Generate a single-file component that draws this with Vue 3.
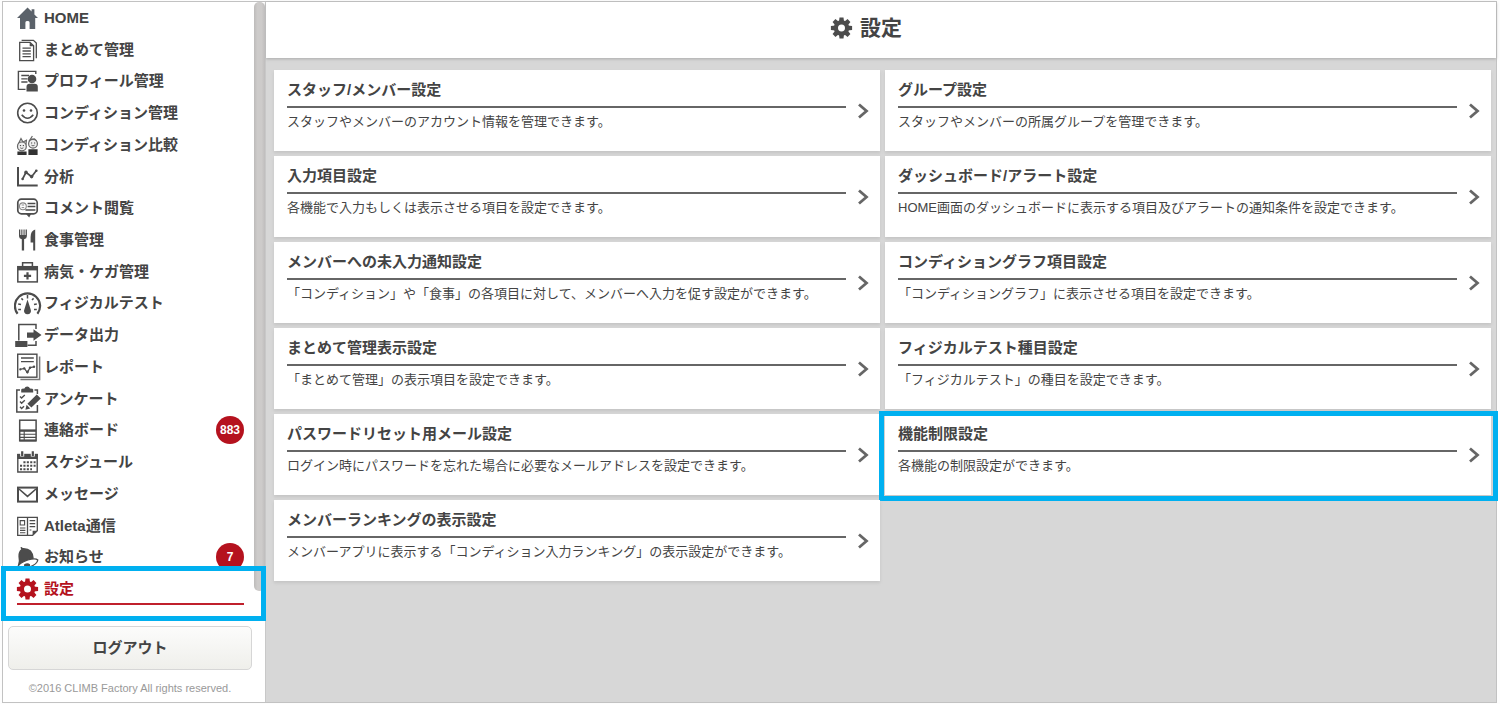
<script setup>
const teeth = (r) =>
  [0, 45, 90, 135, 180, 225, 270, 315]
    .map((a) => `<path d="M10.9 8 L11.5 ${r} H15.5 L16.1 8z" transform="rotate(${a} 13.5 14)"/>`)
    .join('')
const gear = `<g fill="currentColor">${teeth(3.4)}</g><circle cx="13.5" cy="14" r="5.6" fill="none" stroke="currentColor" stroke-width="4.2"/>`

const icons = {
  home: '<path fill="#5b626a" d="M13.5 3.6 L17.6 7.6 V5.2 H20.4 V10.4 L24 14 H21.2 V25 H15.6 V18.4 q0-1.4-2.1-1.4 t-2.1 1.4 V25 H6 V14 H3z"/>',
  docs: '<g fill="none" stroke="currentColor" stroke-width="1.3"><path d="M5.7 6.3 H16 L19.6 9.8 V24.7 H5.7z"/><path d="M7.6 4.3 H19.4 L22.3 7 V22.3"/><path d="M8.5 12.2 H16.8 M8.5 15 H16.8 M8.5 17.8 H16.8 M8.5 20.6 H16.8"/></g><path fill="currentColor" d="M15.7 6.2 V10.2 H19.8z"/>',
  profile: '<path d="M21.8 7 V4.4 H4.4 V22.4 H11.5" fill="none" stroke="currentColor" stroke-width="1.4"/><path d="M7.3 8.5 H15 M7.3 11.8 H13.5 M7.3 15 H13.5" stroke="currentColor" stroke-width="1.3"/><circle cx="18" cy="12" r="4.3" fill="currentColor"/><path d="M12.5 24.6 V20 q0-3.2 3.2-3.2 H20.6 q3.2 0 3.2 3.2 V24.6z" fill="currentColor"/>',
  smile: '<circle cx="13.5" cy="14" r="9.8" fill="none" stroke="currentColor" stroke-width="1.6"/><circle cx="10" cy="11.5" r="1.3" fill="currentColor"/><circle cx="17" cy="11.5" r="1.3" fill="currentColor"/><path d="M7.7 15.8 q5.8 7 11.6 0" fill="none" stroke="currentColor" stroke-width="1.6"/>',
  compare: '<g fill="#eee" stroke="#666" stroke-width="1.2"><path d="M4.6 12.6 L7 7.6 L9 11 L12.4 9.2 L12 13z M15 10.4 L18.4 5 M15.6 8.6 L20.5 8 L22.6 10"/><circle cx="7.9" cy="15.4" r="4.4"/><circle cx="19" cy="12.8" r="4.4"/></g><path d="M6.2 16.8 q1.6 1.4 3.2 0 M17.4 14.2 q1.6 1.4 3.2 0" fill="none" stroke="#666"/><path d="M3.4 24 V20.4 H12.6 V24z M14.4 24 V18.2 H23.6 V24z" fill="#333"/><path d="M5.9 14.6 h1.2 M8.8 14.6 h1.2 M17 12 h1.2 M20 12 h1.2" stroke="#444"/>',
  chart: '<path d="M4 4 V22.6 H23.7" fill="none" stroke="currentColor" stroke-width="2"/><path d="M8.3 16.5 L12 9.3 L17.6 13.7 L22.6 7.2" fill="none" stroke="currentColor" stroke-width="1.7"/><g fill="currentColor"><circle cx="8.6" cy="16" r="1.2"/><circle cx="12" cy="9.4" r="1.8"/><circle cx="17.6" cy="13.6" r="1.8"/><circle cx="22.3" cy="7.8" r="1.3"/></g>',
  comment: '<rect x="3.8" y="5.2" width="19.4" height="14.6" rx="3.6" fill="none" stroke="currentColor" stroke-width="1.7"/><circle cx="8.9" cy="12.3" r="3.4" fill="none" stroke="#888" stroke-width="1.1"/><path d="M7.6 11 h2.6 M7.6 13.6 h2.6" stroke="#888"/><path d="M13.6 9.6 H21.4 M13.6 12.6 H21.4 M11.5 16 H21.4" stroke="currentColor" stroke-width="1.5"/><path d="M12 20 H17 L15.2 23.4z" fill="currentColor"/>',
  meal: '<path fill="currentColor" d="M5 3.6 H6.3 V9 H7.3 V3.6 H8.4 V9 H9.5 V3.6 H10.6 V9 H11.6 V3.6 H12.9 V10.2 q0 2.4-2.8 3 V24.5 H7.8 V13.2 q-2.8-.6-2.8-3z M21.2 3.6 V24.5 H19.2 V16.6 H16.6 V11 q0-6 4.6-7.4z"/>',
  medical: '<path d="M8.6 8.5 V4.7 H18.4 V8.5" fill="none" stroke="currentColor" stroke-width="1.5"/><rect x="3.8" y="8.7" width="19.5" height="15.2" fill="none" stroke="currentColor" stroke-width="1.5"/><path d="M3.8 8.2 H23.3 V12.4 H3.8z" fill="currentColor"/><path d="M13.5 14.2 V21.4 M9.9 17.8 H17.1" stroke="currentColor" stroke-width="2.2"/>',
  gauge: '<path d="M3.6 24.8 A12.6 12.6 0 1 1 23.4 24.8" fill="none" stroke="currentColor" stroke-width="2.2"/><path d="M13.5 6 V9.6 M7.4 9.4 L9 11 M19.6 9.4 L18 11 M4.2 15 L7 15.6 M22.8 15 L20 15.6 M4.2 20.6 H7 M22.8 20.6 H20" stroke="currentColor" stroke-width="1.5"/><path d="M13.5 10.5 L16.6 20.2 A3.5 3.5 0 1 1 10.4 20.2z" fill="currentColor"/>',
  output: '<path d="M4.8 19.5 V3.6 H22 V8 M22 20 V24.3 H13.5" fill="none" stroke="currentColor" stroke-width="1.5"/><path d="M1.2 20 H13.4 V26 H1.2z M13 11.4 H19.5 V8.2 L27.5 14 L19.5 19.8 V16.8 H13z" fill="currentColor"/>',
  report: '<rect x="3.7" y="1.2" width="19.2" height="23" fill="none" stroke="currentColor" stroke-width="1.4"/><path d="M25.6 3.6 V26.6 H6.4" fill="none" stroke="#777" stroke-width="1.5"/><path d="M7 5 H19.8 M7 8.6 H19.8" stroke="currentColor" stroke-width="1.3"/><path d="M6 16.4 L10.4 15.4 L13.3 19.6 L16 14.6 L20 13.8" fill="none" stroke="currentColor" stroke-width="1.2"/><g fill="currentColor"><circle cx="6.3" cy="16.4" r="1.1"/><circle cx="10.2" cy="15.4" r="1.2"/><circle cx="13.4" cy="19" r="1.4"/><circle cx="16" cy="14.8" r="1.2"/><circle cx="20" cy="13.8" r="1.2"/></g>',
  survey: '<path d="M6 5 H2.8 V27 H23.4 V20 M20.5 5 H23.4 V9" fill="none" stroke="currentColor" stroke-width="1.5"/><path d="M7.2 7.4 V4.4 Q7.2 3.4 10.4 3.4 A3 3 0 0 1 16 3.4 Q19.2 3.4 19.2 4.4 V7.4z" fill="currentColor"/><path d="M6 11.4 l1.6 1.7 l3.2-3 M6 16.6 l1.6 1.7 l3.2-3 M6 21.8 l1.6 1.7 l2.4-2.3" fill="none" stroke="currentColor" stroke-width="1.4"/><path d="M22.8 9.6 L26.8 13.4 L17.4 22.6 L13.4 18.8z M12.6 19.8 L16.2 23.4 L11.4 24.8z" fill="currentColor"/>',
  board: '<rect x="5.7" y="4.2" width="16.4" height="20.6" fill="none" stroke="currentColor" stroke-width="1.5"/><path d="M5.7 14.6 H22.1" stroke="currentColor" stroke-width="2.4"/><path d="M5.7 18.2 H22.1 M5.7 21.4 H22.1 M10.2 15 V24.5" stroke="currentColor" stroke-width="1.1"/><path d="M5.7 24.4 H22.1" stroke="currentColor" stroke-width="2"/>',
  calendar: '<path d="M3.8 6 V24 H23.2 V6" fill="none" stroke="currentColor" stroke-width="1.4"/><path d="M3.2 5.8 H23.8 V11 H3.2z" fill="currentColor"/><path d="M8.2 3 V8.6 M18.8 3 V8.6" stroke="#fff" stroke-width="4"/><path d="M8.2 3.2 V8 M18.8 3.2 V8" stroke="currentColor" stroke-width="2.2"/><path d="M9.4 14.3 H21.6 M6 17.8 H21.6 M6 21.3 H18" stroke="currentColor" stroke-width="2.1" stroke-dasharray="2.1 1.3"/>',
  mail: '<rect x="4" y="7.6" width="19" height="14" fill="none" stroke="currentColor" stroke-width="2"/><path d="M5 9 L13.5 16.4 L22 9" fill="none" stroke="currentColor" stroke-width="1.6"/>',
  news: '<path d="M3.7 5.4 H23.3 V18.8 L18.6 23.4 H3.7z M13.5 5.4 V23.4" fill="none" stroke="currentColor" stroke-width="1.3"/><path d="M23.3 18.8 H18.6 V23.4z" fill="currentColor"/><path d="M6.2 8.6 H10.6 V13 H6.2z M15.6 8.6 H21.2 M15.6 11.6 H21.2 M15.6 14.6 H21.2 M6 16 H11.4 M6 18.4 H11.4 M6 20.8 H11.4 M15.6 18 H17.4" fill="none" stroke="currentColor" stroke-width="1.1"/>',
  bell: '<path d="M6.4 4.6 q1.4-1.2 2.2 .4 q10.4-.6 11.2 10.4 L3.8 22.8 q1.8-4.6 .6-9.4 q-.2-5 2.8-7.2z" fill="currentColor"/><path d="M4 23.4 q1.4-3.4 9.8-6.4 q7.6-2.2 10 0 q-.6 4.4-9 7.3 q-7.7 2-10.8-.9z" fill="#fff" stroke="currentColor" stroke-width="1.3"/><path d="M10 21.6 q3.4-2.6 6-.4 q.8 3-2.6 3.4 q-3.8 0-3.4-3z" fill="currentColor"/>',
  gear
}

const menu = [
  { icon: 'home', label: 'HOME' },
  { icon: 'docs', label: 'まとめて管理' },
  { icon: 'profile', label: 'プロフィール管理' },
  { icon: 'smile', label: 'コンディション管理' },
  { icon: 'compare', label: 'コンディション比較' },
  { icon: 'chart', label: '分析' },
  { icon: 'comment', label: 'コメント閲覧' },
  { icon: 'meal', label: '食事管理' },
  { icon: 'medical', label: '病気・ケガ管理' },
  { icon: 'gauge', label: 'フィジカルテスト' },
  { icon: 'output', label: 'データ出力' },
  { icon: 'report', label: 'レポート' },
  { icon: 'survey', label: 'アンケート' },
  { icon: 'board', label: '連絡ボード', badge: 883 },
  { icon: 'calendar', label: 'スケジュール' },
  { icon: 'mail', label: 'メッセージ' },
  { icon: 'news', label: 'Atleta通信' },
  { icon: 'bell', label: 'お知らせ', badge: 7 },
  { icon: 'gear', label: '設定', active: true }
]

const cards = [
  { title: 'スタッフ/メンバー設定', text: 'スタッフやメンバーのアカウント情報を管理できます。' },
  { title: 'グループ設定', text: 'スタッフやメンバーの所属グループを管理できます。' },
  { title: '入力項目設定', text: '各機能で入力もしくは表示させる項目を設定できます。' },
  { title: 'ダッシュボード/アラート設定', text: 'HOME画面のダッシュボードに表示する項目及びアラートの通知条件を設定できます。' },
  { title: 'メンバーへの未入力通知設定', text: '「コンディション」や「食事」の各項目に対して、メンバーへ入力を促す設定ができます。' },
  { title: 'コンディショングラフ項目設定', text: '「コンディショングラフ」に表示させる項目を設定できます。' },
  { title: 'まとめて管理表示設定', text: '「まとめて管理」の表示項目を設定できます。' },
  { title: 'フィジカルテスト種目設定', text: '「フィジカルテスト」の種目を設定できます。' },
  { title: 'パスワードリセット用メール設定', text: 'ログイン時にパスワードを忘れた場合に必要なメールアドレスを設定できます。' },
  { title: '機能制限設定', text: '各機能の制限設定ができます。', marked: true },
  { title: 'メンバーランキングの表示設定', text: 'メンバーアプリに表示する「コンディション入力ランキング」の表示設定ができます。' }
]
</script>

<template>
  <div class="frame">
    <aside class="sidebar">
      <nav class="nav">
        <ul class="menu">
          <li v-for="item in menu" :key="item.label" class="item">
            <a href="#" class="link" :class="{ active: item.active }">
              <svg class="icon" viewBox="0 0 28 28" aria-hidden="true" v-html="icons[item.icon]"></svg>
              <span class="label">{{ item.label }}</span>
              <span v-if="item.badge" class="badge">{{ item.badge }}</span>
            </a>
            <span v-if="item.active" class="menu-mark"></span>
          </li>
        </ul>
        <span class="scrollbar"></span>
      </nav>
      <div class="foot">
        <button type="button" class="logout">ログアウト</button>
        <small class="copy">©2016 CLIMB Factory All rights reserved.</small>
      </div>
    </aside>
    <main class="main">
      <header class="header">
        <svg class="icon" viewBox="0 0 28 28" aria-hidden="true" v-html="icons.gear"></svg>
        <h1 class="heading">設定</h1>
      </header>
      <div class="grid">
        <a v-for="card in cards" :key="card.title" href="#" class="card" :class="{ marked: card.marked }">
          <div class="body">
            <h2 class="title">{{ card.title }}</h2>
            <p class="text">{{ card.text }}</p>
          </div>
          <svg class="chevron" viewBox="0 0 12 16" aria-hidden="true">
            <path d="M2 1.5 L9.5 8 L2 14.5" fill="none" stroke="currentColor" stroke-width="2.8" />
          </svg>
        </a>
      </div>
    </main>
  </div>
</template>

<style>
body {
  background: #fdfdfd;
}
</style>

<style scoped>
.frame,
.frame * {
  box-sizing: border-box;
}
.frame {
  display: flex;
  min-height: calc(100vh - 2px);
  border: 1px solid #c2c2c2;
  margin: 1px 3px 1px 2px;
  font-family: "Liberation Sans", "Noto Sans CJK JP", sans-serif;
  color: #444;
}
.sidebar {
  display: flex;
  flex-direction: column;
  flex: 0 0 263px;
  background: #fff;
  border-right: 1px solid #c8c8c8;
}
.nav {
  position: relative;
  display: flex;
  flex: 1;
}
.menu {
  display: flex;
  flex: 1;
  flex-direction: column;
  margin: 0;
  padding: 0;
  list-style: none;
}
.item {
  position: relative;
  display: flex;
  flex: 1;
}
.link {
  display: flex;
  flex: 1;
  align-items: center;
  gap: 2px;
  padding: 0 21px 0 11px;
  color: inherit;
  font-size: 15px;
  font-weight: bold;
  line-height: 20px;
  text-decoration: none;
}
.icon {
  flex: none;
  width: 28px;
  height: 28px;
  color: #4c4c4c;
}
.label {
  flex: 1;
}
.badge {
  width: 28px;
  height: 28px;
  border-radius: 50%;
  background: #b5121e;
  color: #fff;
  font-size: 12px;
  line-height: 28px;
  text-align: center;
}
.active,
.active .icon {
  color: #b5121e;
}
.active::after {
  content: "";
  position: absolute;
  right: 21px;
  bottom: 0;
  left: 14px;
  height: 2px;
  background: #c0202c;
}
.menu-mark {
  position: absolute;
  z-index: 2;
  top: -7px;
  right: -1px;
  bottom: -16px;
  left: -2px;
  border: 5px solid #00b0f0;
}
.scrollbar {
  position: absolute;
  z-index: 1;
  top: 0;
  right: 0;
  bottom: 14px;
  width: 11px;
  border-radius: 5px;
  background: linear-gradient(90deg, #bdbbba, #cdcbca 30%, #cdcbca 70%, #bfbdbd);
}
.foot {
  display: flex;
  flex-direction: column;
  gap: 12px;
  padding: 21px 13px 7px 5px;
}
.logout {
  height: 44px;
  border: 1px solid #d6d6d6;
  border-radius: 5px;
  background: linear-gradient(#fcfcfb, #efefeb);
  color: #444;
  font: bold 15px/20px "Liberation Sans", "Noto Sans CJK JP", sans-serif;
}
.copy {
  color: #999;
  font-size: 11px;
  line-height: 13px;
  text-align: center;
}
.main {
  flex: 1;
  background: #d7d7d7;
}
.header {
  display: flex;
  align-items: center;
  justify-content: center;
  gap: 4px;
  height: 56px;
  padding: 0 32px 4px 0;
  background: #fff;
  box-shadow: 0 1px 3px #aaa;
}
.heading {
  margin: 0;
  font-size: 21px;
  line-height: 28px;
}
.grid {
  display: grid;
  grid-template-columns: 1fr 1fr;
  gap: 5px;
  padding: 12px 5px 12px 8px;
}
.card {
  position: relative;
  display: flex;
  align-items: center;
  gap: 11px;
  min-height: 81px;
  padding: 0 11px 0 13px;
  background: #fff;
  box-shadow: 0 2px 3px #c4c4c4;
  color: inherit;
  text-decoration: none;
}
.body {
  flex: 1;
  min-height: 61px;
}
.title {
  margin: 0;
  padding-bottom: 6px;
  border-bottom: 2px solid #666;
  font-size: 15px;
  line-height: 20px;
}
.text {
  margin: 4px 0 0;
  font-size: 13px;
  line-height: 20px;
}
.chevron {
  flex: none;
  width: 12px;
  height: 16px;
  color: #666;
}
.marked::after {
  content: "";
  position: absolute;
  inset: -3px -7px -6px -6px;
  border: 5px solid #00b0f0;
}
</style>
